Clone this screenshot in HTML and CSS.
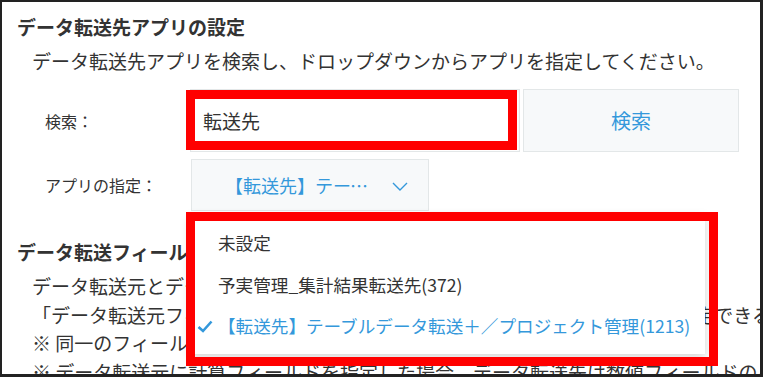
FILE: index.html
```html
<!DOCTYPE html>
<html lang="ja">
<head>
  <meta charset="UTF-8" />
  <meta name="viewport" content="width=device-width, initial-scale=1" />
  <title>プラグイン設定</title>
  <link rel="stylesheet" href="styles.css">
</head>
<body>
  <div class="frame">
    <!-- 転送先アプリ -->
    <section class="block">
      <h2 class="block-title">データ転送先アプリの設定</h2>
      <div class="block-desc">
        <p>データ転送先アプリを検索し、ドロップダウンからアプリを指定してください。</p>
      </div>

      <div class="form-row form-row-search">
        <label class="form-label" for="app-search">検索：</label>
        <div class="search-field">
          <input class="search-input" id="app-search" type="text" value="転送先" />
          <button class="search-btn" type="button">検索</button>
        </div>
      </div>

      <div class="form-row form-row-select">
        <span class="form-label">アプリの指定：</span>
        <div class="select-wrap">
          <div class="select">
            <span class="select-text">【転送先】テーブルデータ転送＋／プロジェクト管理(1213)</span>
            <svg class="select-arrow" width="16" height="9" viewBox="0 0 16 9">
              <polyline points="1,1 8,8 15,1" fill="none" stroke="#3498db" stroke-width="1.4" />
            </svg>
          </div>
          <ul class="dropdown">
            <li class="dropdown-item">未設定</li>
            <li class="dropdown-item">予実管理_集計結果転送先(372)</li>
            <li class="dropdown-item is-selected">
              <svg class="check" width="16" height="13" viewBox="0 0 16 13">
                <polyline points="1.5,7 6,11 14.5,1.5" fill="none" stroke="#3498db" stroke-width="2.6" />
              </svg>
              【転送先】テーブルデータ転送＋／プロジェクト管理(1213)
            </li>
          </ul>
        </div>
      </div>
    </section>

    <!-- 転送フィールド -->
    <section class="block block-fields">
      <h2 class="block-title">データ転送フィールドの設定</h2>
      <div class="block-desc">
        <p>データ転送元とデータ転送先のフィールドを指定してください。</p>
        <p>「データ転送元フィールド」で選んだフィールドタイプに応じて、転送先に指定できるフィールドが異なります。</p>
        <p>※ 同一のフィールドを複数回指定することはできません。</p>
        <p>※ データ転送元に計算フィールドを指定した場合、データ転送先は数値フィールドのみ指定できます。</p>
      </div>
    </section>

    <!-- 注記の赤枠 -->
    <div class="mark mark-search"></div>
    <div class="mark mark-dropdown"></div>
  </div>
</body>
</html>
```

FILE: styles.css
```css
:root {
  --text: #333;
  --blue: #3498db;
  --line: #e3e7e8;
  --field-bg: #f7f9fa;
  --mark: #ff0000;
}

* { box-sizing: border-box; }

body {
  margin: 0;
  background: #fff;
  font-family: "Noto Sans CJK JP", "Noto Sans", sans-serif;
  color: var(--text);
}

/* screenshot frame */
.frame {
  position: relative;
  width: 763px;
  height: 377px;
  overflow: hidden;
  border-style: solid;
  border-color: #222;
  border-width: 2px 3px 3px 2px;
  padding: 12px 0 0 15px;
  background: #fff;
}

/* Sections */
.block-title {
  margin: 0 0 7px;
  font-size: 19px;
  font-weight: 700;
  line-height: 26px;
  white-space: nowrap;
}
.block-desc {
  padding-left: 15px;
  font-size: 19px;
  line-height: 28.5px;
}
.block-desc p {
  margin: 0;
  white-space: nowrap;
}
.block-fields {
  margin-top: 28px;
}

/* Form rows */
.form-row {
  display: flex;
  align-items: center;
  padding-left: 28px;
}
.form-row-search { margin-top: 13.5px; }
.form-row-select { margin-top: 7px; }

.form-label {
  width: 145px;
  flex-shrink: 0;
  font-size: 16px;
  line-height: 22px;
}

.search-field {
  display: flex;
  gap: 3px;
}
.search-input {
  width: 330px;
  height: 63px;
  padding: 0 12px;
  border: 1px solid var(--line);
  box-shadow: inset 0 2px 3px rgba(0,0,0,0.05);
  font: inherit;
  font-size: 19px;
  color: var(--text);
  background: #fff;
  outline: none;
}
.search-btn {
  width: 216px;
  height: 63px;
  border: 1px solid var(--line);
  background: var(--field-bg);
  color: var(--blue);
  font: inherit;
  font-size: 20px;
  cursor: pointer;
}

/* Select */
.select-wrap {
  position: relative;
  margin-left: 1px;
}
.select {
  display: flex;
  align-items: center;
  width: 238px;
  height: 52px;
  padding-left: 33px;
  border: 1px solid var(--line);
  background: var(--field-bg);
  color: var(--blue);
  font-size: 18px;
}
.select-text {
  width: 150px;
  overflow: hidden;
  white-space: nowrap;
  text-overflow: ellipsis;
  line-height: 24px;
}
.select-arrow {
  margin-left: 17px;
  margin-top: 2px;
}

/* Dropdown menu */
.dropdown {
  position: absolute;
  top: 56px;
  left: -1px;
  z-index: 2;
  width: 515px;
  margin: 0;
  padding: 7px 0;
  list-style: none;
  background: #fff;
  box-shadow: 0 3px 10px rgba(0,0,0,0.18);
}
.dropdown-item {
  position: relative;
  height: 41.5px;
  padding-left: 28px;
  font-size: 17.6px;
  line-height: 41.5px;
  white-space: nowrap;
}
.dropdown-item.is-selected {
  color: var(--blue);
}
.check {
  position: absolute;
  left: 7px;
  top: 15px;
}

/* Red annotation boxes */
.mark {
  position: absolute;
  z-index: 3;
  border: 9px solid var(--mark);
  pointer-events: none;
}
.mark-search {
  left: 184px;
  top: 88px;
  width: 331px;
  height: 60px;
}
.mark-dropdown {
  left: 184px;
  top: 210px;
  width: 532px;
  height: 154px;
}
```
